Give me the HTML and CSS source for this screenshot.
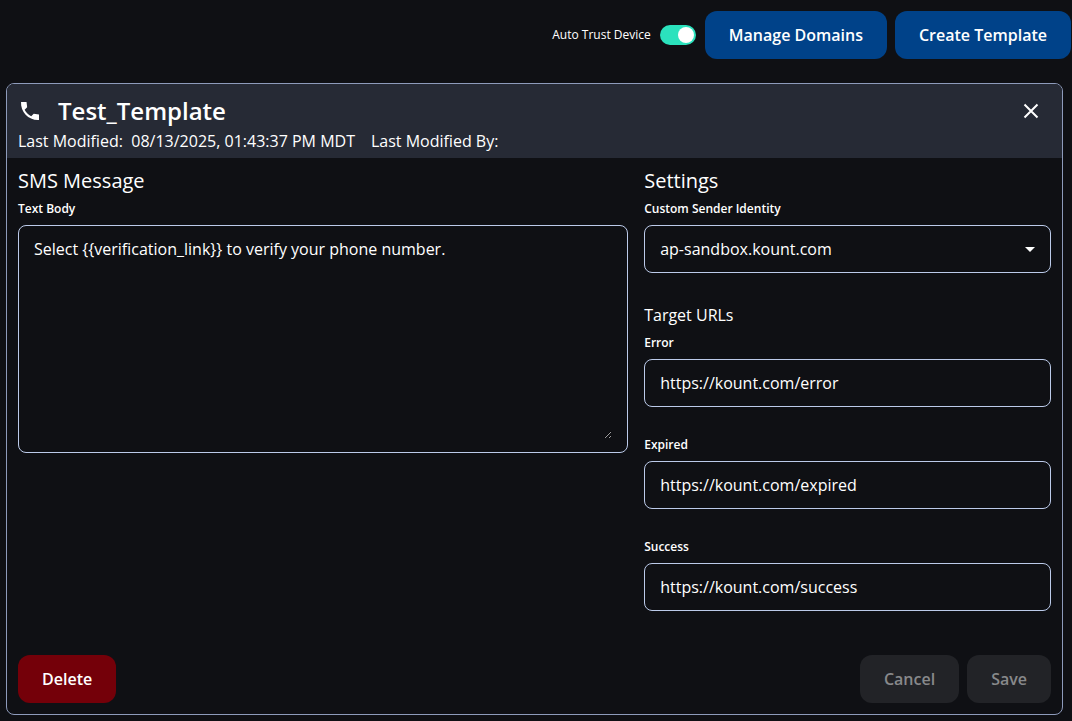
FILE: index.html
```html
<!DOCTYPE html>
<html lang="en">
<head>
  <meta charset="UTF-8">
  <meta name="viewport" content="width=device-width, initial-scale=1">
  <title>Templates</title>
  <link rel="stylesheet" href="styles.css">
</head>
<body>
  <!-- Page actions -->
  <div class="toolbar">
    <label class="toggle" for="autoTrust">
      Auto Trust Device
      <input type="checkbox" id="autoTrust" role="switch" checked>
    </label>
    <button type="button" class="btn btn-primary">Manage Domains</button>
    <button type="button" class="btn btn-primary">Create Template</button>
  </div>

  <form class="card">
    <header class="card-header">
      <div class="title-row">
        <svg class="phone-icon" viewBox="0 0 24 24" aria-hidden="true">
          <path d="M21 15.460l-5.270-.610-2.520 2.520c-2.830-1.440-5.150-3.750-6.590-6.590l2.530-2.530L8.540 3H3.030C2.450 13.180 10.820 21.550 21 20.970v-5.510z"/>
        </svg>
        <h1>Test_Template</h1>
        <button type="button" class="close" aria-label="Close">
          <svg viewBox="0 0 24 24" aria-hidden="true">
            <path d="M5.500 5.500l13 13M18.500 5.500l-13 13"/>
          </svg>
        </button>
      </div>
      <div class="meta">
        <span>Last Modified:&nbsp; 08/13/2025, 01:43:37 PM MDT</span>
        <span>Last Modified By:</span>
      </div>
    </header>

    <div class="card-body">
      <section>
        <h2>SMS Message</h2>
        <label for="textBody">Text Body</label>
        <div class="box">
          <textarea id="textBody">Select {{verification_link}} to verify your phone number.</textarea>
        </div>
      </section>

      <section>
        <h2>Settings</h2>
        <div class="field">
          <label for="sender">Custom Sender Identity</label>
          <div class="select">
            <select id="sender" class="control">
              <option>ap-sandbox.kount.com</option>
            </select>
            <svg viewBox="0 0 10 5" aria-hidden="true"><path d="M0 0h10L5 5z"/></svg>
          </div>
        </div>

        <h3>Target URLs</h3>
        <div class="field">
          <label for="errorUrl">Error</label>
          <input type="url" id="errorUrl" class="control" value="https://kount.com/error">
        </div>
        <div class="field">
          <label for="expiredUrl">Expired</label>
          <input type="url" id="expiredUrl" class="control" value="https://kount.com/expired">
        </div>
        <div class="field">
          <label for="successUrl">Success</label>
          <input type="url" id="successUrl" class="control" value="https://kount.com/success">
        </div>
      </section>
    </div>

    <footer class="card-footer">
      <button type="button" class="btn btn-danger">Delete</button>
      <button type="button" class="btn" disabled>Cancel</button>
      <button type="submit" class="btn" disabled>Save</button>
    </footer>
  </form>
</body>
</html>
```
FILE: styles.css
```css
* {
  box-sizing: border-box;
}
body {
  margin: 0;
  padding: 11px 1px 6px 6px;
  background: #0f1014;
  color: #fff;
  font-family: "Open Sans", sans-serif;
  font-size: 16px;
  line-height: 24px;
}
h1, h2, h3 {
  margin: 0;
}
button, input, select, textarea {
  font: inherit;
  color: inherit;
}

/* Toolbar */
.toolbar {
  display: flex;
  justify-content: flex-end;
  align-items: center;
  gap: 8px;
  margin-bottom: 24px;
}
.toggle {
  display: flex;
  align-items: center;
  gap: 9px;
  padding-right: 1px;
  font-size: 12px;
}
.toggle input {
  appearance: none;
  display: flex;
  justify-content: flex-end;
  width: 36px;
  height: 20px;
  margin: 0;
  padding: 2px;
  border-radius: 10px;
  background: #2be2bd;
}
.toggle input::before {
  content: "";
  width: 16px;
  height: 16px;
  border-radius: 50%;
  background: #fff;
}
.toggle input:not(:checked) {
  justify-content: flex-start;
  background: #555a66;
}

/* Buttons */
.btn {
  height: 48px;
  padding: 0 24px;
  border: none;
  border-radius: 12px;
  font-weight: 600;
  cursor: pointer;
}
.btn-primary {
  background: #004289;
}
.btn-danger {
  background: #740009;
  margin-right: auto;
}
.btn:disabled {
  background: #222327;
  color: #88898b;
  cursor: default;
}

/* Template card */
.card {
  margin-right: 8px;
  border: 1px solid #8e9bbb;
  border-radius: 8px;
  overflow: hidden;
}
.card-header {
  padding: 10px 11px 5px;
  background: #262a35;
}
.title-row {
  display: flex;
  align-items: center;
  height: 34px;
  margin-bottom: 1px;
}
.title-row h1 {
  margin-left: 16px;
  font-size: 24px;
  font-weight: 600;
  line-height: 32px;
}
.phone-icon {
  width: 24px;
  height: 24px;
  fill: #fff;
}
.close {
  display: flex;
  margin-left: auto;
  padding: 8px;
  border: none;
  background: none;
  cursor: pointer;
}
.close svg {
  width: 24px;
  height: 24px;
  stroke: #fff;
  stroke-width: 2;
}
.meta {
  display: flex;
  gap: 16px;
}
.card-body {
  display: grid;
  grid-template-columns: 3fr 2fr;
  gap: 16px;
  padding: 8px 11px 0;
}
.card-body h2 {
  font-size: 20px;
  font-weight: 400;
  line-height: 30px;
}
.card-body h3 {
  padding-top: 2px;
  font-size: 16px;
  font-weight: 400;
  line-height: 30px;
}
.card-body label {
  display: block;
  padding: 4px 0 8px;
  font-size: 12px;
  font-weight: 600;
  line-height: 17px;
}
.field {
  margin-bottom: 25px;
}
.box, .control {
  border: 1px solid #bccbea;
  border-radius: 8px;
}
.box {
  padding: 11px 15px 13px;
}
.box textarea {
  display: block;
  width: 100%;
  height: 202px;
  padding: 0;
  border: none;
  outline: none;
  background: none;
  resize: vertical;
}
.control {
  appearance: none;
  display: block;
  width: 100%;
  height: 48px;
  padding: 0 15px;
  background: #0f1014;
}
.select {
  position: relative;
}
.select svg {
  position: absolute;
  top: 22px;
  right: 16px;
  width: 10px;
  height: 5px;
  fill: #fff;
  pointer-events: none;
}
.card-footer {
  display: flex;
  gap: 8px;
  padding: 19px 11px 11px;
}
```
